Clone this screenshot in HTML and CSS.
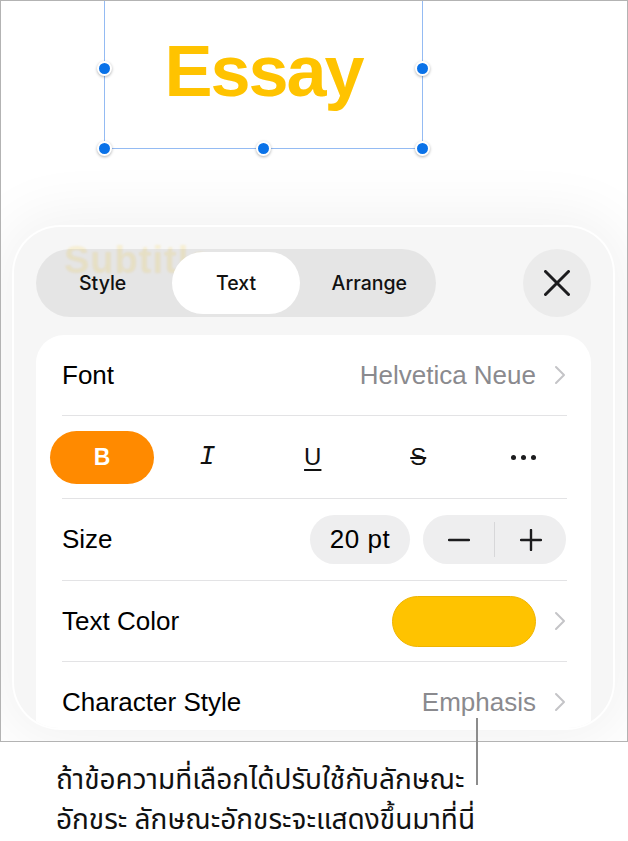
FILE: index.html
```html
<!DOCTYPE html>
<html lang="th">
<head>
<meta charset="utf-8">
<title>Text format</title>
<link rel="stylesheet" href="styles.css">
</head>
<body>
<div class="page">
  <div class="frame">
    <div class="canvas">
      <div class="selbox">
        <span class="essay">Essay</span>
        <i class="handle h-tm"></i>
        <i class="handle h-ml"></i>
        <i class="handle h-mr"></i>
        <i class="handle h-bl"></i>
        <i class="handle h-bm"></i>
        <i class="handle h-br"></i>
      </div>
    </div>
    <div class="sheet">
      <div class="ghost" aria-hidden="true">Subtitle</div>
      <div class="toolbar">
        <div class="segmented">
          <div class="seg">Style</div>
          <div class="seg active">Text</div>
          <div class="seg">Arrange</div>
        </div>
        <button class="close" aria-label="Close">
          <svg width="26" height="26" viewBox="0 0 26 26"><path d="M1.5 1.5 L24.5 24.5 M24.5 1.5 L1.5 24.5" stroke="#1c1c1e" stroke-width="3" stroke-linecap="round" fill="none"/></svg>
        </button>
      </div>
      <div class="card">
        <div class="row">
          <span class="label">Font</span>
          <span class="value">Helvetica Neue</span>
          <svg class="chev" width="12" height="20" viewBox="0 0 12 20"><path d="M2 2 L10 10 L2 18" stroke="#c4c4c7" stroke-width="2" fill="none" stroke-linecap="round" stroke-linejoin="round"/></svg>
        </div>
        <div class="row row-btns">
          <div class="btns">
            <span class="fbtn bold-on">B</span>
            <span class="fbtn ital">I</span>
            <span class="fbtn under">U</span>
            <span class="fbtn strike">S</span>
            <span class="fbtn more"><i></i><i></i><i></i></span>
          </div>
        </div>
        <div class="row">
          <span class="label">Size</span>
          <span class="sizepill">20 pt</span>
          <div class="stepper">
            <span class="step"><svg width="22" height="22" viewBox="0 0 22 22"><path d="M1 11 H21" stroke="#1c1c1e" stroke-width="2.4" stroke-linecap="round"/></svg></span>
            <span class="divider"></span>
            <span class="step"><svg width="22" height="22" viewBox="0 0 22 22"><path d="M1 11 H21 M11 1 V21" stroke="#1c1c1e" stroke-width="2.4" stroke-linecap="round"/></svg></span>
          </div>
        </div>
        <div class="row">
          <span class="label">Text Color</span>
          <span class="swatch"></span>
          <svg class="chev" width="12" height="20" viewBox="0 0 12 20"><path d="M2 2 L10 10 L2 18" stroke="#c4c4c7" stroke-width="2" fill="none" stroke-linecap="round" stroke-linejoin="round"/></svg>
        </div>
        <div class="row last">
          <span class="label">Character Style</span>
          <span class="value">Emphasis</span>
          <svg class="chev" width="12" height="20" viewBox="0 0 12 20"><path d="M2 2 L10 10 L2 18" stroke="#c4c4c7" stroke-width="2" fill="none" stroke-linecap="round" stroke-linejoin="round"/></svg>
        </div>
      </div>
    </div>
  </div>
  <div class="callout">
    <p>ถ้าข้อความที่เลือกได้ปรับใช้กับลักษณะ<br>อักขระ ลักษณะอักขระจะแสดงขึ้นมาที่นี่</p>
  </div>
  <span class="callout-line"></span>
</div>
</body>
</html>
```
FILE: styles.css
```css
html, body {
  margin: 0;
  padding: 0;
  background: #ffffff;
}
body {
  font-family: "Liberation Sans", Arial, sans-serif;
  color: #000;
}
.page {
  position: relative;
  width: 628px;
  height: 841px;
  overflow: hidden;
}
.frame {
  position: relative;
  width: 626px;
  height: 740px;
  border: 1px solid #b3b3b3;
  background: #ffffff;
  overflow: hidden;
}
.canvas {
  display: flow-root;
  height: 224px;
  padding-left: 103px;
  box-sizing: border-box;
}
.selbox {
  position: relative;
  box-sizing: border-box;
  width: 319px;
  height: 161px;
  margin-top: -13px;
  border: 1px solid #94bbf3;
  display: flex;
  align-items: center;
  justify-content: center;
  padding-top: 4px;
}
.essay {
  font-family: "Liberation Sans", Arial, sans-serif;
  font-weight: bold;
  font-size: 72px;
  line-height: 1;
  letter-spacing: -2px;
  color: #ffc300;
}
.handle {
  position: absolute;
  width: 11px;
  height: 11px;
  border: 2px solid #ffffff;
  border-radius: 50%;
  background: #0a72e8;
  box-shadow: 0 1px 3px rgba(0, 0, 0, 0.3);
}
.h-tm { left: 150.5px; top: -9px; }
.h-ml { left: -8px; top: 71.5px; }
.h-mr { left: 310px; top: 71.5px; }
.h-bl { left: -8px; top: 152px; }
.h-bm { left: 150.5px; top: 152px; }
.h-br { left: 310px; top: 152px; }

.sheet {
  position: relative;
  box-sizing: border-box;
  margin-left: 11px;
  width: 603px;
  height: 505px;
  border: 2px solid rgba(255, 255, 255, 0.95);
  border-radius: 48px;
  background: #f6f6f6;
  box-shadow: 0 0 60px 12px rgba(0, 0, 0, 0.055);
  overflow: hidden;
  padding: 22px 22px 0;
}
.ghost {
  position: absolute;
  left: 50px;
  top: 14px;
  font-weight: bold;
  font-size: 38px;
  line-height: 1;
  letter-spacing: 1px;
  color: rgba(255, 196, 0, 0.14);
  filter: blur(1.2px);
}
.toolbar {
  position: relative;
  display: flex;
  align-items: center;
  justify-content: space-between;
  height: 68px;
}
.segmented {
  display: flex;
  width: 400px;
  height: 68px;
  box-sizing: border-box;
  padding: 3px 0;
  border-radius: 34px;
  background: rgba(0, 0, 0, 0.065);
}
.seg {
  flex: 1;
  display: flex;
  align-items: center;
  justify-content: center;
  margin: 0 3px;
  border-radius: 31px;
  font-family: "Inter", "Liberation Sans", sans-serif;
  font-weight: 500;
  font-size: 19.5px;
  color: #111;
}
.seg.active {
  background: #ffffff;
}
.close {
  width: 68px;
  height: 68px;
  border: 0;
  padding: 0;
  border-radius: 50%;
  background: #ebebeb;
  display: flex;
  align-items: center;
  justify-content: center;
}
.card {
  margin-top: 18px;
  background: #ffffff;
  border-radius: 28px 28px 0 0;
  height: 420px;
}
.row {
  display: flex;
  align-items: center;
  height: 80px;
  margin: 0 24px 0 26px;
  border-bottom: 1px solid #e3e3e5;
  font-size: 26px;
}
.row-btns { height: 82px; }
.row.last { border-bottom: 0; }
.row:nth-child(3) { height: 81px; }
.label {
  flex: 1;
  color: #000;
}
.value {
  color: #8a8a8e;
  margin-right: 18px;
}
.chev {
  margin-right: 1px;
  flex: none;
}
.btns {
  display: grid;
  grid-template-columns: repeat(5, 105.5px);
  margin-left: -13px;
  align-items: center;
}
.fbtn {
  display: flex;
  align-items: center;
  justify-content: center;
  height: 53px;
  color: #111;
}
.bold-on {
  width: 104px;
  margin-left: 1px;
  border-radius: 27px;
  background: #ff8a00;
  color: #fff;
  font-weight: bold;
  font-size: 23px;
}
.ital {
  font-family: "Liberation Mono", monospace;
  font-style: italic;
  font-size: 27px;
  font-weight: normal;
}
.under {
  font-size: 24px;
  text-decoration: underline;
  text-decoration-thickness: 2px;
  text-underline-offset: 4px;
}
.strike {
  font-size: 24px;
  text-decoration: line-through;
  text-decoration-thickness: 2px;
}
.more {
  gap: 5px;
}
.more i {
  width: 5px;
  height: 5px;
  border-radius: 50%;
  background: #1c1c1e;
}
.sizepill {
  display: flex;
  align-items: center;
  justify-content: center;
  width: 100px;
  height: 49px;
  border-radius: 25px;
  background: #eeeeef;
  letter-spacing: 0.5px;
  margin-right: 13px;
}
.stepper {
  display: flex;
  align-items: center;
  width: 143px;
  height: 49px;
  border-radius: 25px;
  background: #eeeeef;
  margin-right: 1px;
}
.step {
  flex: 1;
  display: flex;
  align-items: center;
  justify-content: center;
}
.divider {
  width: 1px;
  height: 35px;
  background: #d7d7d9;
}
.swatch {
  box-sizing: border-box;
  width: 144px;
  height: 51px;
  border-radius: 26px;
  background: #ffc300;
  border: 1px solid #efb400;
  margin-right: 18px;
}
.callout {
  padding-left: 56px;
  margin-top: 19px;
}
.callout p {
  margin: 0;
  font-family: "Noto Sans Thai", "Noto Sans", "DejaVu Sans", sans-serif;
  font-size: 28px;
  line-height: 40px;
  color: #111;
}
.callout-line {
  position: absolute;
  left: 476px;
  top: 718px;
  width: 2px;
  height: 67px;
  background: #8c8c8c;
}
```
